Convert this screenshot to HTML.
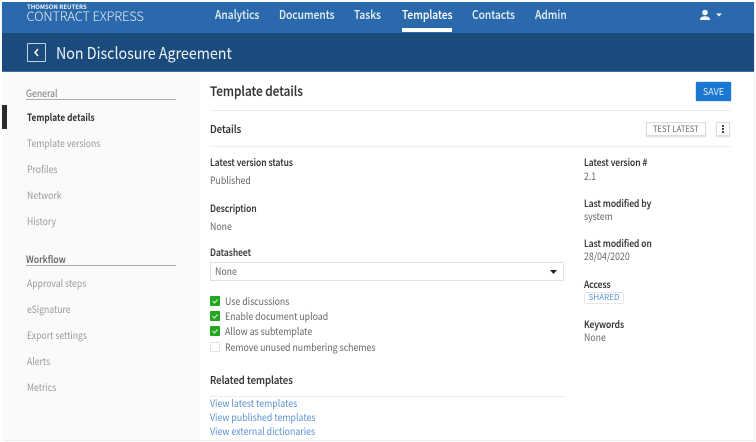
<!DOCTYPE html>
<html><head><meta charset="utf-8"><style>
html,body{margin:0;padding:0;background:#fff}
#p{position:relative;width:756px;height:442px;overflow:hidden;background:#fff;font-family:"Noto Sans CJK JP","Liberation Sans",sans-serif;font-size:10px;color:#555;filter:blur(.3px)}
#p div,#p svg{position:absolute}
.t{white-space:nowrap;line-height:14px;transform-origin:0 50%;transform:scaleX(.87)}
.nav{color:#e3ecf5;font-size:12px;top:8px;font-weight:500;transform:scaleX(.85);-webkit-text-stroke:.1px #e3ecf5}
.side{left:27px;color:#9a9a9a;font-size:10px;transform:scaleX(.865)}
.lab{color:#333;font-size:10px;font-weight:500;transform:scaleX(.85);-webkit-text-stroke:.12px #333}
.val{color:#666;font-size:10px;transform:scaleX(.875)}
.link{left:210px;color:#5b8fd0;font-size:10px;transform:scaleX(.88)}
.cb{left:210px;width:10px;height:10px;background:#22a81c;border-radius:1px}
.chk{left:225px;color:#666;font-size:10px;transform:scaleX(.877)}
</style></head><body><div id="p">
<div style="left:2px;top:2px;width:752px;height:31px;background:#2a69ab"></div>
<div style="left:2px;top:33px;width:752px;height:39px;background:#1b4b7d;border-bottom:1px solid #3f6f9f;box-sizing:border-box"></div>
<div style="left:2px;top:72px;width:198px;height:368px;background:#fafafa"></div>
<div style="left:2px;top:440px;width:752px;height:1px;background:#eee"></div>
<div style="left:754px;top:2px;width:1px;height:439px;background:#eee"></div>

<div class="t" style="left:27px;top:0px;color:#f0f4f8;font-size:6px;font-weight:700;transform:none">THOMSON REUTERS</div>
<div class="t" style="left:26.500px;top:9px;color:#e6eef6;font-size:13px;font-weight:300;letter-spacing:-.2px;transform:none">CONTRACT EXPRESS</div>

<div class="t nav" style="left:215px">Analytics</div>
<div class="t nav" style="left:279px">Documents</div>
<div class="t nav" style="left:354px">Tasks</div>
<div class="t nav" style="left:402px;color:#fff">Templates</div>
<div class="t nav" style="left:472px">Contacts</div>
<div class="t nav" style="left:535px">Admin</div>
<div style="left:402px;top:28px;width:50px;height:4px;background:#fff"></div>

<svg style="left:698px;top:9px" width="28" height="12" viewBox="0 0 28 12"><circle cx="7" cy="3.500" r="2.800" fill="#f4f7fa"/><path d="M2 11c0-2.800 2-3.800 5-3.800s5 1 5 3.800z" fill="#f4f7fa"/><path d="M18 4.500h6l-3 3z" fill="#f4f7fa"/></svg>

<div style="left:27px;top:43px;width:19px;height:19px;box-sizing:border-box;border:1px solid #c3d2e2;border-radius:1px"></div>
<svg style="left:33px;top:48px" width="7" height="9" viewBox="0 0 7 9"><path d="M5 1L2 4.500 5 8" fill="none" stroke="#fff" stroke-width="1.500"/></svg>
<div class="t" style="left:56px;top:41px;color:#eef3f8;font-size:16px;line-height:22px;transform:scaleX(.89)">Non Disclosure Agreement</div>

<div class="t" style="left:26px;top:86px;color:#777">General</div>
<div style="left:26px;top:99px;width:150px;height:1px;background:#aaa"></div>
<div style="left:2px;top:105px;width:5px;height:24px;background:#2a2a2a"></div>
<div class="t side" style="top:110px;color:#333;font-weight:700;left:26.500px;transform:scaleX(.83)">Template details</div>
<div class="t side" style="top:136px">Template versions</div>
<div class="t side" style="top:162px">Profiles</div>
<div class="t side" style="top:188px">Network</div>
<div class="t side" style="top:214px">History</div>
<div class="t" style="left:26px;top:252px;color:#666;font-weight:500;transform:scaleX(.87);-webkit-text-stroke:.1px #666">Workflow</div>
<div style="left:26px;top:265px;width:150px;height:1px;background:#aaa"></div>
<div class="t side" style="top:276px">Approval steps</div>
<div class="t side" style="top:302px">eSignature</div>
<div class="t side" style="top:328px">Export settings</div>
<div class="t side" style="top:354px">Alerts</div>
<div class="t side" style="top:380px">Metrics</div>

<div class="t" style="left:210px;top:82px;color:#333;font-size:13px;font-weight:500;line-height:18px;transform:scaleX(.905);-webkit-text-stroke:.15px #333">Template details</div>
<div style="left:696px;top:82px;width:35px;height:19px;background:#1b78d2;border-radius:1px;box-shadow:0 0 1px #0f5ca8;color:#e6f0fa;font-size:9px;line-height:19px;text-align:center">SAVE</div>
<div style="left:210px;top:110px;width:521px;height:1px;background:#ececec"></div>

<div class="t" style="left:210px;top:123px;color:#333;font-size:10.500px;font-weight:500;transform:scaleX(.91);-webkit-text-stroke:.12px #333">Details</div>
<div style="left:646px;top:122px;width:60px;height:14px;box-sizing:border-box;border:1px solid #ddd;box-shadow:0 1px 1px #ddd;background:#fff"></div>
<div class="t" style="left:653px;top:122px;color:#666;font-size:8.500px;transform:scaleX(.89)">TEST LATEST</div>
<div style="left:716px;top:122px;width:14px;height:14px;box-sizing:border-box;border:1px solid #ddd;box-shadow:0 1px 1px #ddd;background:#fff"></div>
<svg style="left:722px;top:125px" width="2" height="8" viewBox="0 0 2 8"><path d="M0 0h2v2H0zM0 3h2v2H0zM0 6h2v2H0z" fill="#444"/></svg>
<div style="left:210px;top:146px;width:521px;height:1px;background:#eee"></div>

<div class="t lab" style="left:210px;top:155px">Latest version status</div>
<div class="t val" style="left:210px;top:173px">Published</div>
<div class="t lab" style="left:210px;top:201px">Description</div>
<div class="t val" style="left:210px;top:219px">None</div>
<div class="t lab" style="left:210px;top:245px">Datasheet</div>
<div style="left:210px;top:262px;width:354px;height:19px;box-sizing:border-box;border:1px solid #e2e2e2;background:#fff"></div>
<div class="t val" style="left:215px;top:264px">None</div>
<svg style="left:550px;top:270px" width="7" height="4" viewBox="0 0 7 4"><path d="M0 0h7L3.500 4z" fill="#222"/></svg>

<div class="cb" style="top:296px"></div>
<div class="cb" style="top:311px"></div>
<div class="cb" style="top:326px"></div>
<div style="left:210px;top:342px;width:10px;height:10px;box-sizing:border-box;border:1px solid #e2e2e2;border-radius:1px;background:#fff"></div>
<svg style="left:210px;top:296px" width="10" height="40" viewBox="0 0 10 40"><path d="M2.500 5l2 2 3-3.500M2.500 20l2 2 3-3.500M2.500 35l2 2 3-3.500" fill="none" stroke="#d8f0d6" stroke-width="1"/></svg>
<div class="t chk" style="top:294px">Use discussions</div>
<div class="t chk" style="top:309px">Enable document upload</div>
<div class="t chk" style="top:324px">Allow as subtemplate</div>
<div class="t chk" style="top:340px">Remove unused numbering schemes</div>

<div class="t" style="left:210px;top:374px;color:#333;font-size:10.500px;font-weight:500;transform:scaleX(.91);-webkit-text-stroke:.12px #333">Related templates</div>
<div style="left:210px;top:396px;width:355px;height:1px;background:#eee"></div>
<div class="t link" style="top:396px">View latest templates</div>
<div class="t link" style="top:410px">View published templates</div>
<div class="t link" style="top:424px">View external dictionaries</div>

<div class="t lab" style="left:584px;top:155px">Latest version #</div>
<div class="t val" style="left:584px;top:169px">2.1</div>
<div class="t lab" style="left:584px;top:196px">Last modified by</div>
<div class="t val" style="left:584px;top:209px">system</div>
<div class="t lab" style="left:584px;top:236px">Last modified on</div>
<div class="t val" style="left:584px;top:249px">28/04/2020</div>
<div class="t lab" style="left:584px;top:277px">Access</div>
<div style="left:584px;top:292px;width:40px;height:12px;box-sizing:border-box;border:1px solid #e6e6e6;border-radius:2px;color:#5b8fd0;font-size:8px;line-height:10px;text-align:center">SHARED</div>
<div class="t lab" style="left:584px;top:317px">Keywords</div>
<div class="t val" style="left:584px;top:330px">None</div>
</div></body></html>
